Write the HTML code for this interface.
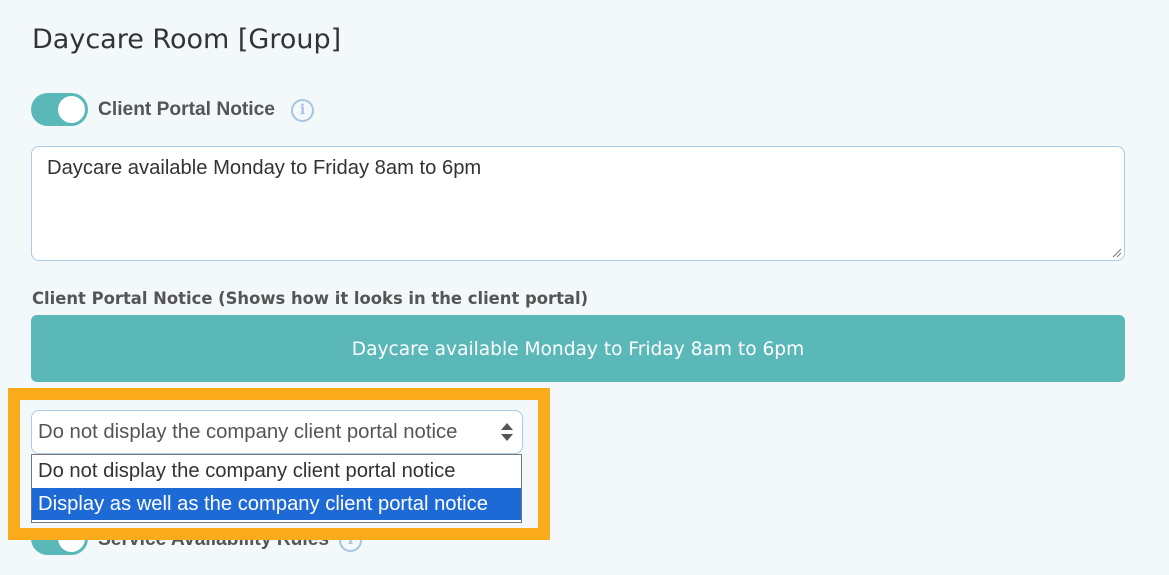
<!DOCTYPE html>
<html><head><style>
body{margin:0;width:1169px;height:575px;background:#f3f8fb;position:relative;overflow:hidden;font-family:"Liberation Sans",Arial,sans-serif}
.a{position:absolute}
.os{font-family:"DejaVu Sans","Liberation Sans",sans-serif}
.tog{width:57px;height:33px;border-radius:17px;background:#5bb8b8}
.tog::after{content:"";position:absolute;left:27px;top:3px;width:27px;height:27px;border-radius:50%;background:#fff}
.info{width:19px;height:19px;border:2px solid #a8c4de;border-radius:50%;color:#a8c4de;font:bold 14px "DejaVu Serif",serif;text-align:center;line-height:19px}
.lb{font-family:"Liberation Sans",sans-serif;font-weight:bold;font-size:19.2px;color:#555}
</style></head><body>
<div class="a os" style="left:32px;top:24px;font-size:27px;color:#333">Daycare Room [Group]</div>
<div class="a tog" style="left:31px;top:93px"></div>
<div class="a lb" style="left:98px;top:99px">Client Portal Notice</div>
<div class="a info" style="left:291px;top:99px">i</div>
<div class="a" style="left:31px;top:146px;width:1092px;height:113px;background:#fff;border:1px solid #a9cbe6;border-radius:8px"></div>
<div class="a" style="left:47px;top:157px;font-size:20.2px;color:#333">Daycare available Monday to Friday 8am to 6pm</div>
<svg class="a" style="left:1112px;top:248px" width="10" height="10"><path d="M1 9L9 1M5 9L9 5" stroke="#777" stroke-width="1"/></svg>
<div class="a os" style="left:32px;top:289px;font-size:16.4px;font-weight:bold;color:#555">Client Portal Notice (Shows how it looks in the client portal)</div>
<div class="a os" style="left:31px;top:315px;width:1094px;height:67px;background:#5bb8b8;border-radius:6px;color:#fff;font-size:18.6px;text-align:center;line-height:70px">Daycare available Monday to Friday 8am to 6pm</div>
<div class="a tog" style="left:31px;top:522px"></div>
<div class="a lb" style="left:98px;top:529px">Service Availability Rules</div>
<div class="a info" style="left:339px;top:529px">i</div>
<div class="a" style="left:8px;top:388px;width:518px;height:128px;border:12px solid #f9ab1c;background:#f3f8fb"></div>
<div class="a" style="left:31px;top:410px;width:490px;height:42px;background:#fff;border:1px solid #a9cbe6;border-radius:8px"></div>
<div class="a" style="left:38px;top:421px;font-size:20.3px;color:#555">Do not display the company client portal notice</div>
<svg class="a" style="left:500px;top:422px" width="14" height="20"><path d="M1 8L7 1L13 8Z M1 12L7 19L13 12Z" fill="#555"/></svg>
<div class="a" style="left:31px;top:454px;width:489px;height:67px;background:#fff;border:1px solid #777"></div>
<div class="a" style="left:38px;top:460px;font-size:20.2px;color:#333">Do not display the company client portal notice</div>
<div class="a" style="left:32px;top:488px;width:489px;height:32px;background:#1d69d6"></div>
<div class="a" style="left:38px;top:493px;font-size:20.2px;color:#fff">Display as well as the company client portal notice</div>
</body></html>
